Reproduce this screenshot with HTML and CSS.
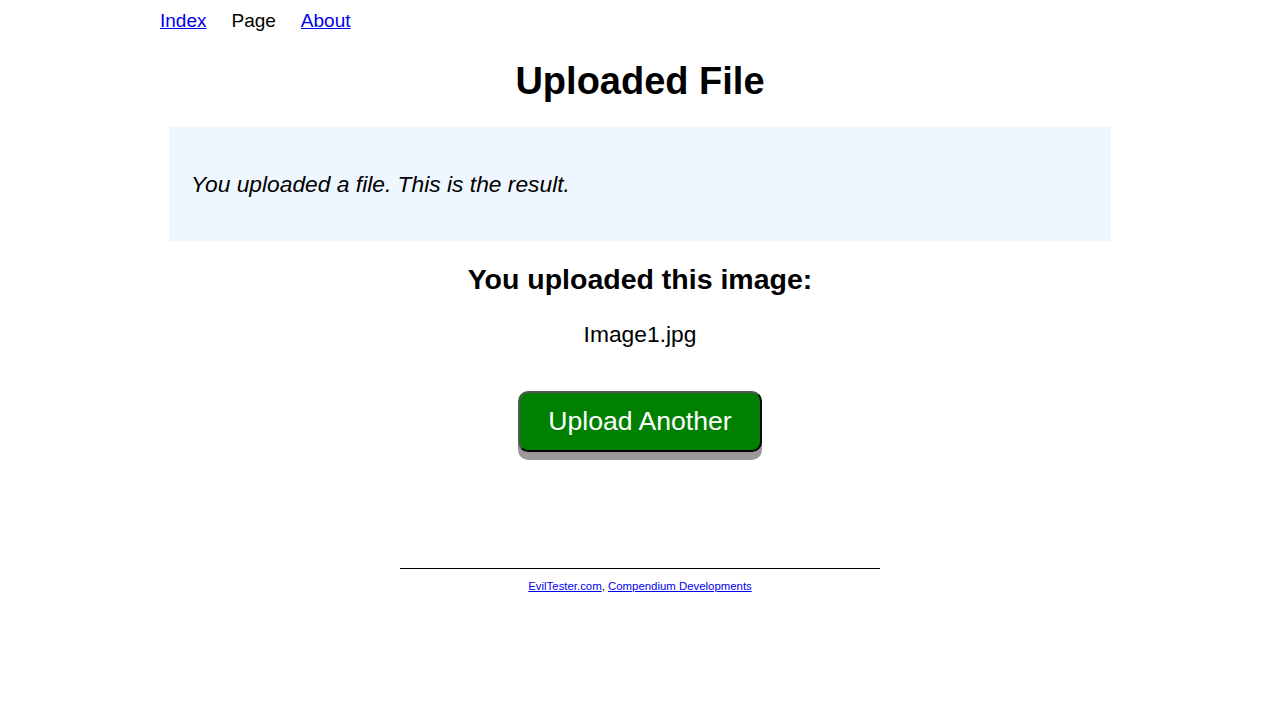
FILE: index.html
```html
<!DOCTYPE html>
<html>
<head>
<meta charset="utf-8">
<title>Uploaded File</title>
<link rel="stylesheet" href="styles.css">
</head>
<body>
<div class="page">
  <nav class="nav">
    <a href="#">Index</a>
    <span>Page</span>
    <a href="#">About</a>
  </nav>
  <h1 class="title">Uploaded File</h1>
  <div class="explanation">
    <p>You uploaded a file. This is the result.</p>
  </div>
  <div class="result">
    <h2 class="sub">You uploaded this image:</h2>
    <p class="filename">Image1.jpg</p>
    <div class="actions">
      <a class="button" href="#">Upload Another</a>
    </div>
  </div>
  <footer class="footer">
    <hr class="rule">
    <p class="credits"><a href="#">EvilTester.com</a>, <a href="#">Compendium Developments</a></p>
  </footer>
</div>
</body>
</html>
```
FILE: styles.css
```css
html, body {
  margin: 0;
  padding: 0;
  background: #fff;
}
body {
  font-family: "Liberation Sans", Arial, sans-serif;
  font-size: 19px;
  color: #000;
}
.page {
  width: 960px;
  margin: 0 auto;
}
.nav {
  display: flex;
  gap: 25px;
  padding-top: 10px;
  height: 24px;
  line-height: 22px;
}
.nav a {
  color: #0000ee;
}
.title {
  margin: 25px 0 0;
  text-align: center;
  font-size: 38px;
  line-height: 44px;
  font-weight: bold;
}
.explanation {
  margin: 24px 9px 0;
  background: #eef7ff;
  padding: 0 22px;
  height: 114px;
  display: flex;
  align-items: center;
}
.explanation p {
  margin: 0;
  font-size: 22.8px;
  font-style: italic;
}
.result {
  text-align: center;
}
.sub {
  margin: 21px 0 0;
  font-size: 28.5px;
  line-height: 34px;
}
.filename {
  margin: 25px 0 0;
  font-size: 22.8px;
  line-height: 26px;
}
.actions {
  margin-top: 44px;
  display: flex;
  justify-content: center;
}
.button {
  display: block;
  width: 240px;
  height: 57px;
  box-sizing: content-box;
  line-height: 57px;
  background: #008000;
  color: #fff;
  text-decoration: none;
  font-size: 26.6px;
  border: 2px solid;
  border-color: #555 #000 #000 #555;
  border-radius: 10px;
  box-shadow: 0 8px 0 #999;
  text-align: center;
}
.footer {
  margin-top: 116px;
  text-align: center;
}
.rule {
  width: 480px;
  margin: 0 auto;
  border: 0;
  border-top: 1px solid #000;
  height: 0;
}
.credits {
  margin: 10px 0 0;
  font-size: 11.4px;
  line-height: 14px;
}
.credits a {
  color: #0000ee;
}
```
